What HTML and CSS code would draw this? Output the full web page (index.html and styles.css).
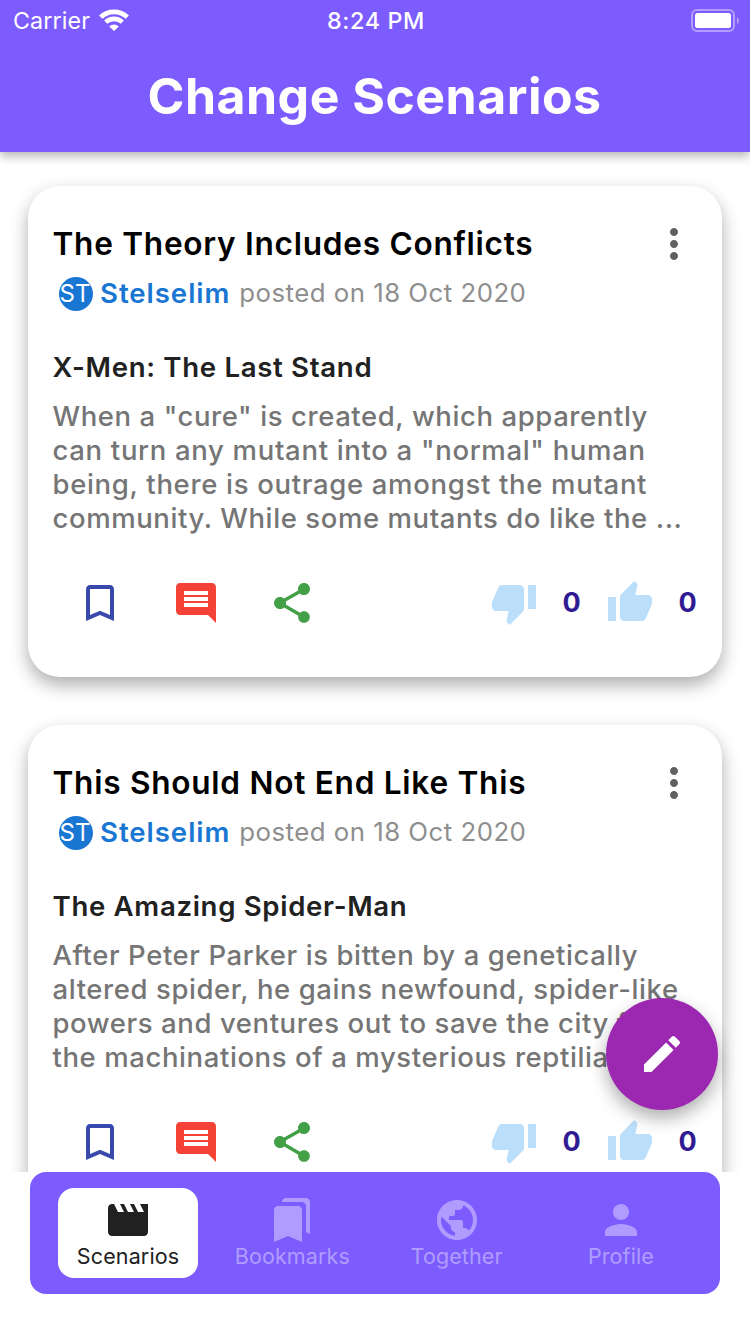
FILE: index.html
```html
<!DOCTYPE html>
<html lang="en">
<head>
<meta charset="utf-8">
<title>Change Scenarios</title>
<link rel="stylesheet" href="styles.css">
</head>
<body>
<svg class="sprite" aria-hidden="true">
  <symbol id="more" viewBox="0 0 24 24"><path d="M12 8c1.1 0 2-.9 2-2s-.9-2-2-2-2 .9-2 2 .9 2 2 2zm0 2c-1.1 0-2 .9-2 2s.9 2 2 2 2-.9 2-2-.9-2-2-2zm0 6c-1.1 0-2 .9-2 2s.9 2 2 2 2-.9 2-2-.9-2-2-2z"/></symbol>
  <symbol id="bookmark" viewBox="0 0 24 24"><path d="M17 3H7c-1.1 0-1.99.9-1.99 2L5 21l7-3 7 3V5c0-1.1-.9-2-2-2zm0 15l-5-2.18L7 18V5h10v13z"/></symbol>
  <symbol id="comment" viewBox="0 0 24 24"><path d="M21.99 4c0-1.1-.89-2-1.99-2H4c-1.1 0-2 .9-2 2v12c0 1.1.9 2 2 2h14l4 4-.01-18zM18 14H6v-2h12v2zm0-3H6V9h12v2zm0-3H6V6h12v2z"/></symbol>
  <symbol id="share" viewBox="0 0 24 24"><path d="M18 16.08c-.76 0-1.44.3-1.96.77L8.91 12.7c.05-.23.09-.46.09-.7s-.04-.47-.09-.7l7.05-4.11c.54.5 1.25.81 2.04.81 1.66 0 3-1.34 3-3s-1.34-3-3-3-3 1.34-3 3c0 .24.04.47.09.7L8.04 9.81C7.5 9.31 6.79 9 6 9c-1.66 0-3 1.34-3 3s1.34 3 3 3c.79 0 1.5-.31 2.04-.81l7.12 4.16c-.05.21-.08.43-.08.65 0 1.61 1.31 2.92 2.92 2.92s2.92-1.31 2.92-2.92-1.31-2.92-2.92-2.92z"/></symbol>
  <symbol id="down" viewBox="0 0 24 24"><path d="M15 3H6c-.83 0-1.54.5-1.84 1.22l-3.02 7.05c-.09.23-.14.47-.14.73v2c0 1.1.9 2 2 2h6.31l-.95 4.57-.03.32c0 .41.17.79.44 1.06L9.83 23l6.59-6.59c.36-.36.58-.86.58-1.41V5c0-1.1-.9-2-2-2zm4 0v12h4V3h-4z"/></symbol>
  <symbol id="up" viewBox="0 0 24 24"><path d="M1 21h4V9H1v12zm22-11c0-1.1-.9-2-2-2h-6.31l.95-4.57.03-.32c0-.41-.17-.79-.44-1.06L14.17 1 7.59 7.59C7.22 7.95 7 8.45 7 9v10c0 1.1.9 2 2 2h9c.83 0 1.54-.5 1.84-1.22l3.02-7.05c.09-.23.14-.47.14-.73v-2z"/></symbol>
  <symbol id="pencil" viewBox="0 0 24 24"><path d="M3 17.25V21h3.75L17.81 9.94l-3.75-3.75L3 17.25zM20.71 7.04c.39-.39.39-1.02 0-1.41l-2.34-2.34c-.39-.39-1.02-.39-1.41 0l-1.83 1.83 3.75 3.75 1.83-1.83z"/></symbol>
  <symbol id="movie" viewBox="0 0 24 24"><path d="M18 4l2 4h-3l-2-4h-2l2 4h-3l-2-4H8l2 4H7L5 4H4c-1.1 0-1.99.9-1.99 2L2 18c0 1.1.9 2 2 2h16c1.1 0 2-.9 2-2V4h-4z"/></symbol>
  <symbol id="bookmarks" viewBox="0 0 24 24"><path d="M19 18l2 1V3c0-1.1-.9-2-2-2H8.99C7.89 1 7 1.9 7 3h10c1.1 0 2 .9 2 2v13zM15 5H5c-1.1 0-2 .9-2 2v16l7-3 7 3V7c0-1.1-.9-2-2-2z"/></symbol>
  <symbol id="globe" viewBox="0 0 24 24"><path d="M12 2C6.48 2 2 6.48 2 12s4.48 10 10 10 10-4.48 10-10S17.52 2 12 2zm-1 17.93c-3.95-.49-7-3.85-7-7.93 0-.62.08-1.21.21-1.79L9 15v1c0 1.1.9 2 2 2v1.93zm6.9-2.54c-.26-.81-1-1.39-1.9-1.39h-1v-3c0-.55-.45-1-1-1H8v-2h2c.55 0 1-.45 1-1V7h2c1.1 0 2-.9 2-2v-.41c2.93 1.19 5 4.06 5 7.41 0 2.08-.8 3.97-2.1 5.39z"/></symbol>
  <symbol id="person" viewBox="0 0 24 24"><path d="M12 12c2.21 0 4-1.79 4-4s-1.79-4-4-4-4 1.79-4 4 1.79 4 4 4zm0 2c-2.67 0-8 1.34-8 4v2h16v-2c0-2.66-5.33-4-8-4z"/></symbol>
</svg>
<div class="screen">
  <header class="app-bar">
    <div class="status">
      <div class="network"><span>Carrier</span>
        <svg class="wifi" viewBox="0 0 30 22"><path d="M15 22l4.8-4.6a6.8 6.8 0 0 0-9.6 0z"/><path class="arc" d="M6.7 13.2a12 12 0 0 1 16.6 0M1.7 8.2a19.2 19.2 0 0 1 26.6 0"/></svg>
      </div>
      <span class="clock">8:24 PM</span>
      <svg class="battery" viewBox="0 0 48 23"><rect class="shell" x="1" y="1" width="42" height="21" rx="5"/><rect class="charge" x="4" y="4" width="36" height="15" rx="2.5"/><path class="cap" d="M46 8c2.6 1 2.6 6 0 7z"/></svg>
    </div>
    <h1 class="heading">Change Scenarios</h1>
  </header>
  <main class="feed">
    <article class="card">
      <div class="title-row"><h2 class="title">The Theory Includes Conflicts</h2><svg class="icon more"><use href="#more"/></svg></div>
      <div class="byline"><span class="avatar"><span>ST</span></span><span class="author">Stelselim</span><span class="date">posted on 18 Oct 2020</span></div>
      <h3 class="film">X-Men: The Last Stand</h3>
      <p class="story">When a "cure" is created, which apparently<br><span class="loose">can turn any mutant into a "normal" human</span><br><span class="loose">being, there is outrage amongst the mutant</span><br>community. While some mutants do like the ...</p>
      <div class="actions"><svg class="icon bookmark"><use href="#bookmark"/></svg><svg class="icon comment"><use href="#comment"/></svg><svg class="icon share"><use href="#share"/></svg><div class="votes"><svg class="icon vote"><use href="#down"/></svg><span class="count">0</span><svg class="icon vote"><use href="#up"/></svg><span class="count">0</span></div></div>
    </article>
    <article class="card">
      <div class="title-row"><h2 class="title">This Should Not End Like This</h2><svg class="icon more"><use href="#more"/></svg></div>
      <div class="byline"><span class="avatar"><span>ST</span></span><span class="author">Stelselim</span><span class="date">posted on 18 Oct 2020</span></div>
      <h3 class="film">The Amazing Spider-Man</h3>
      <p class="story">After Peter Parker is bitten by a genetically<br>altered spider, he gains newfound, spider-like<br>powers and ventures out to save the city from<br>the machinations of a mysterious reptilia...</p>
      <div class="actions"><svg class="icon bookmark"><use href="#bookmark"/></svg><svg class="icon comment"><use href="#comment"/></svg><svg class="icon share"><use href="#share"/></svg><div class="votes"><svg class="icon vote"><use href="#down"/></svg><span class="count">0</span><svg class="icon vote"><use href="#up"/></svg><span class="count">0</span></div></div>
    </article>
  </main>
  <button class="fab" aria-label="Write a scenario"><svg class="icon"><use href="#pencil"/></svg></button>
  <nav class="tabs">
    <a class="tab active"><svg class="icon"><use href="#movie"/></svg><span>Scenarios</span></a>
    <a class="tab"><svg class="icon"><use href="#bookmarks"/></svg><span>Bookmarks</span></a>
    <a class="tab"><svg class="icon"><use href="#globe"/></svg><span>Together</span></a>
    <a class="tab"><svg class="icon"><use href="#person"/></svg><span>Profile</span></a>
  </nav>
</div>
</body>
</html>
```
FILE: styles.css
```css
* { box-sizing: border-box; }
body { margin: 0; background: #fff; font-family: Inter, "Liberation Sans", sans-serif; }
h1, h2, h3, p { margin: 0; white-space: nowrap; }
.sprite { display: none; }
.icon { width: 48px; height: 48px; flex: none; fill: currentColor; display: block; }

.screen { position: relative; width: 750px; height: 1334px; overflow: hidden; display: flex; flex-direction: column; }

.app-bar { position: relative; z-index: 1; flex: none; height: 152px; background: #7c5cff; color: #fff; box-shadow: 0 4px 10px rgba(0, 0, 0, .3); }
.status { display: grid; grid-template-columns: 1fr auto 1fr; align-items: center; height: 40px; padding: 0 11px 0 13px; font-size: 23.3px; line-height: 40px; }
.network { display: flex; align-items: center; gap: 9px; letter-spacing: .1px; }
.network span, .clock { padding-top: 2px; line-height: 38px; }
.wifi { width: 30px; height: 22px; fill: #fff; }
.wifi .arc { fill: none; stroke: #fff; stroke-width: 4.6; }
.clock { font-weight: 500; letter-spacing: .65px; }
.battery { width: 48px; height: 23px; justify-self: end; }
.battery .shell { fill: none; stroke: #fff; stroke-opacity: .4; stroke-width: 2; }
.battery .charge { fill: #fff; }
.battery .cap { fill: #fff; fill-opacity: .4; }
.heading { height: 112px; padding-right: 1px; line-height: 112px; text-align: center; font-size: 50px; font-weight: 700; letter-spacing: .47px; }

.feed { flex: none; height: 1020px; overflow: hidden; padding: 34px 28px 0; display: flex; flex-direction: column; gap: 48px; }
.card { flex: none; height: 491px; padding: 34px 24px 0 24.5px; border-radius: 32px; background: #fff; box-shadow: 0 8px 18px rgba(0, 0, 0, .32); }
.title-row { display: flex; justify-content: space-between; height: 48px; line-height: 48px; }
.title { font-size: 31.6px; font-weight: 600; letter-spacing: .73px; color: #000; }
.more { color: #616161; }
.byline { display: flex; margin-top: 8px; height: 35px; padding-left: 6.5px; line-height: 34px; }
.avatar { display: flex; justify-content: center; width: 34px; height: 34px; margin: 1px 7px 0 0; border-radius: 50%; background: #1976d2; color: #fff; font-size: 24px; line-height: 34px; }
.avatar span { margin-right: 2px; }
.author { margin-right: 9px; font-size: 27.6px; font-weight: 600; letter-spacing: .95px; color: #1976d2; }
.date { font-size: 25.8px; letter-spacing: .48px; color: #8e8e8e; }
.film { margin-top: 39px; font-size: 27.6px; font-weight: 600; letter-spacing: .68px; line-height: 34px; color: #212121; }
.story { margin-top: 15px; font-size: 27.5px; font-weight: 500; letter-spacing: .59px; line-height: 34px; color: #757575; }
.loose { letter-spacing: .68px; }
.actions { display: flex; margin-top: 44px; padding-left: 23.5px; }
.bookmark { color: #3949ab; }
.comment { margin-left: 48px; color: #f44336; }
.share { margin-left: 48px; color: #43a047; }
.votes { display: flex; margin-left: 174px; color: #311b92; }
.vote { color: #bbdefb; }
.count { width: 68px; padding-left: 24.5px; font-size: 27px; font-weight: 700; line-height: 48px; }

.fab { position: absolute; left: 606px; top: 998px; width: 112px; height: 112px; padding: 32px; border: 0; border-radius: 50%; background: #9c27b0; color: #fff; box-shadow: 0 8px 18px rgba(0, 0, 0, .32); }

.tabs { flex: none; display: flex; gap: 24.8px; margin: 0 30px; height: 122px; padding: 16px 28px 16px 28.3px; border-radius: 16px; background: #7c5cff; color: #b09cff; }
.tab { display: flex; flex: none; flex-direction: column; align-items: center; width: 139.5px; height: 90px; padding-top: 8px; border-radius: 16px; font-size: 21.5px; letter-spacing: .12px; line-height: 24px; }
.active { background: #fff; color: #212121; }
```
